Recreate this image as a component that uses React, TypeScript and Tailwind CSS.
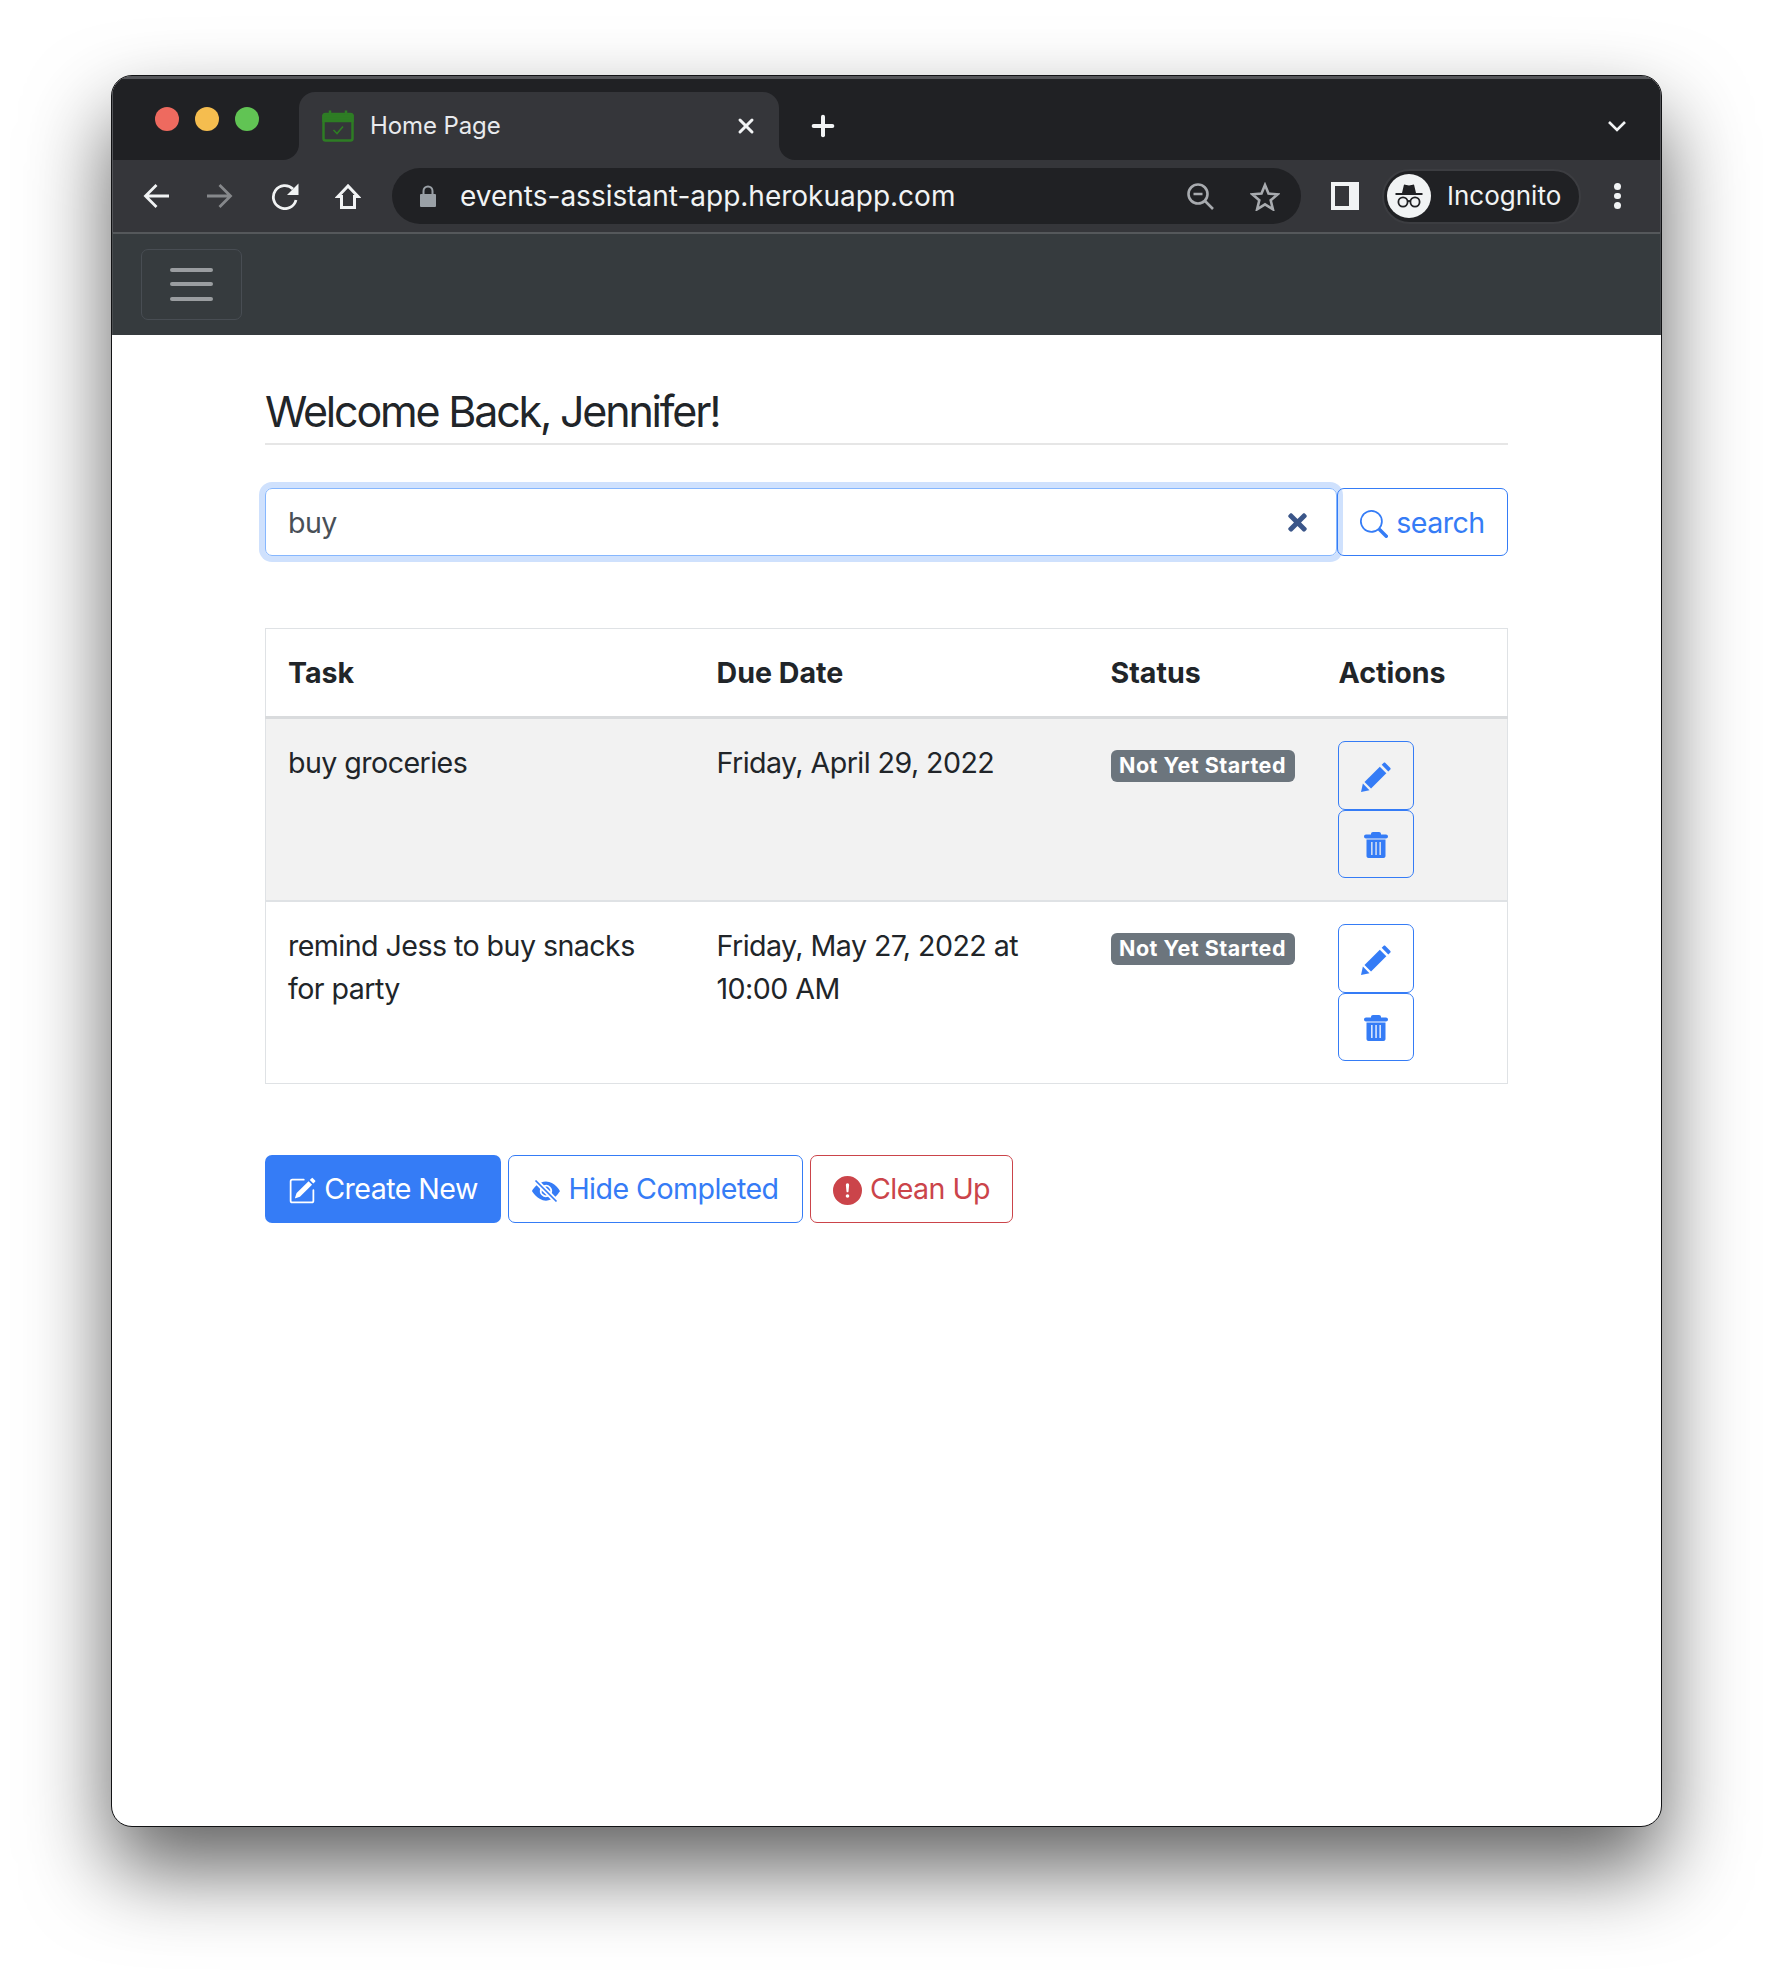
import { Plus, X } from 'lucide-react'
import { BsExclamationCircleFill, BsEyeSlashFill, BsPencilSquare, BsSearch } from 'react-icons/bs'
import { FaTimes } from 'react-icons/fa'

function Favicon() {
  return (
    <svg viewBox="0 0 32 32" className="w-[32px] h-[32px] shrink-0" fill="none" stroke="#2e7d24" strokeWidth="2.5">
      <rect x="1.5" y="4" width="29" height="26.5" rx="2" />
      <path d="M1.5 6h29v5h-29z" fill="#2e7d24" />
      <path d="M8 0.5v4M24 0.5v4" />
      <path d="M11.5 20l3.5 3.5 6-7" strokeWidth="1.6" />
    </svg>
  )
}

function BackIcon({ color }: { color: string }) {
  return (
    <svg viewBox="0 0 26 26" className="w-[26px] h-[26px] shrink-0" fill="none" stroke={color} strokeWidth="2.8">
      <path d="M26 13H3M13.5 2L2.5 13l11 11" />
    </svg>
  )
}

function ForwardIcon({ color }: { color: string }) {
  return (
    <svg viewBox="0 0 26 26" className="w-[26px] h-[26px] shrink-0" fill="none" stroke={color} strokeWidth="2.8">
      <path d="M0 13h23M12.5 2l11 11-11 11" />
    </svg>
  )
}

function ReloadIcon() {
  return (
    <svg viewBox="0 0 28 27" className="w-[28px] h-[27px] shrink-0" fill="none" stroke="#f1f3f4" strokeWidth="2.8">
      <path d="M22 6A11.5 11.5 0 1 0 25 17" />
      <path d="M27.5 0.5v11.5h-11.5z" fill="#f1f3f4" stroke="none" />
    </svg>
  )
}

function HomeIcon() {
  return (
    <svg viewBox="0 0 26 26" className="w-[26px] h-[26px] shrink-0" fill="none" stroke="#f1f3f4" strokeWidth="3">
      <path d="M13 3L3 13.5H6.5V24.5H19.5V13.5H23Z" />
    </svg>
  )
}

function ZoomOutIcon() {
  return (
    <svg viewBox="0 0 27 27" className="w-[27px] h-[27px] shrink-0" fill="none" stroke="#a8abaf" strokeWidth="2.6">
      <circle cx="11" cy="11" r="9.5" />
      <path d="M6.5 11h9M17.5 17.5l8.5 8.5" />
    </svg>
  )
}

function StarIcon() {
  return (
    <svg viewBox="0 0 30 29" className="w-[30px] h-[29px] shrink-0" fill="none" stroke="#a8abaf" strokeWidth="2.6">
      <path d="M15 3l3.5 8.6 9.2.7-7 6 2.2 9-7.900-4.900-7.900 4.900 2.200-9-7-6 9.200-.7z" />
    </svg>
  )
}

function IncognitoIcon() {
  return (
    <div className="w-[44px] h-[44px] rounded-full bg-[#f1f3f4] flex items-center justify-center shrink-0">
      <svg viewBox="0 0 30 30" className="w-[30px] h-[30px]" fill="none" stroke="#202124" strokeWidth="1.8">
        <path d="M8 12L10 3.500 15 4.600 20 3.500 22 12Z" fill="#202124" stroke="none" />
        <path d="M1.500 13h27" />
        <circle cx="9" cy="21" r="4.600" />
        <circle cx="21" cy="21" r="4.600" />
        <path d="M13.600 20.500c1-.8 1.800-.8 2.800 0" />
      </svg>
    </div>
  )
}

function PencilIcon() {
  return (
    <svg viewBox="0 0 29 29" className="w-[30px] h-[30px] mt-[4px]" fill="currentColor">
      <path d="M0 29l1.800-8.200 6.400 6.400z" />
      <path d="M3.400 19.300L18.200 4.500l6.300 6.300L9.700 25.600z" />
      <path d="M20 2.700L22 .8c.4-.4 1-.4 1.400 0l5 5c.4.4.4 1 0 1.400l-2 2z" />
    </svg>
  )
}

function TrashIcon() {
  return (
    <svg viewBox="0 0 24 27" className="w-[24px] h-[27px] mt-[2px]" fill="currentColor">
      <path d="M7 3c0-1.200.8-2 2-2h6c1.200 0 2 .8 2 2v.5h5c1.100 0 2 .9 2 2s-.9 2-2 2H2c-1.100 0-2-.9-2-2s.9-2 2-2h5z" />
      <path
        fillRule="evenodd"
        d="M2.500 8.500h19V25c0 1.100-.9 2-2 2h-15c-1.100 0-2-.9-2-2zM7.200 11v13h1.300V11zM11.400 11v13h1.300V11zM15.500 11v13h1.300V11z"
      />
    </svg>
  )
}

function ActionButtons() {
  return (
    <div className="flex flex-col w-[76px]">
      <button className="h-[68.500px] flex items-center justify-center border border-[#357cf6] rounded-[7px] text-[#357cf6]">
        <PencilIcon />
      </button>
      <button className="h-[68.500px] flex items-center justify-center border border-[#357cf6] rounded-[7px] text-[#357cf6]">
        <TrashIcon />
      </button>
    </div>
  )
}

function StatusBadge() {
  return (
    <span className="inline-flex items-center justify-center h-[32px] w-[184px] rounded-[6px] bg-[#6c757d] text-white text-[21.500px] font-bold tracking-[0.5px]">
      Not Yet Started
    </span>
  )
}

const rows = [
  { task: 'buy groceries', due: 'Friday, April 29, 2022', striped: true },
  { task: 'remind Jess to buy snacks for party', due: 'Friday, May 27, 2022 at 10:00 AM', striped: false },
]

export default function App() {
  return (
    <div className="w-[1772px] h-[1974px] bg-white pt-[75px] pl-[111px] font-['Inter','Liberation_Sans',sans-serif] overflow-hidden">
      <div className="w-[1551px] h-[1752px] rounded-[21px] overflow-hidden bg-white border border-[#111214] shadow-[0_42px_84px_rgba(0,0,0,0.62)] flex flex-col">
        {/* tab strip */}
        <div className="h-[84px] bg-[#202124] border-t-[3px] border-x border-[#55565a] flex items-end shrink-0">
          <div className="flex items-center gap-[16px] pl-[42px] w-[186px] self-start pt-[28px]">
            <span className="w-[24px] h-[24px] rounded-full bg-[#ee6a5f]" />
            <span className="w-[24px] h-[24px] rounded-full bg-[#f5bd4f]" />
            <span className="w-[24px] h-[24px] rounded-full bg-[#61c454]" />
          </div>
          <div className="relative w-[480px] h-[68px] bg-[#35363a] rounded-t-[16px] flex items-center pl-[23px] pr-[21px]">
            <div className="absolute left-[-16px] bottom-0 w-[16px] h-[16px] bg-[#35363a]">
              <div className="w-full h-full bg-[#202124] rounded-br-[16px]" />
            </div>
            <div className="absolute right-[-16px] bottom-0 w-[16px] h-[16px] bg-[#35363a]">
              <div className="w-full h-full bg-[#202124] rounded-bl-[16px]" />
            </div>
            <Favicon />
            <span className="ml-[16px] text-[24px] tracking-[-0.1px] text-[#e8eaed] flex-1 leading-none">Home Page</span>
            <X className="w-[24px] h-[24px] text-[#f1f3f4]" strokeWidth={3} />
          </div>
          <Plus className="w-[32px] h-[32px] text-[#f1f3f4] ml-[28px] mb-[18px]" strokeWidth={3} />
          <div className="flex-1 flex justify-end pr-[34px] pb-[28px]">
            <svg viewBox="0 0 18 12" className="w-[18px] h-[12px]" fill="none" stroke="#f1f3f4" strokeWidth="2.6">
              <path d="M1 2l8 8 8-8" />
            </svg>
          </div>
        </div>
        {/* toolbar */}
        <div className="h-[72px] bg-[#35363a] border-x border-[#55565a] flex items-center shrink-0 pl-[30px]">
          <BackIcon color="#f1f3f4" />
          <div className="ml-[38px]">
            <ForwardIcon color="#86888b" />
          </div>
          <div className="ml-[38px]">
            <ReloadIcon />
          </div>
          <div className="ml-[36px]">
            <HomeIcon />
          </div>
          <div className="ml-[31px] w-[909px] h-[56px] rounded-full bg-[#202124] flex items-center pl-[28px] pr-[21px]">
            <svg viewBox="0 0 16 22" className="w-[16px] h-[22px] shrink-0" fill="#9aa0a6">
              <path d="M1 9h14a1 1 0 0 1 1 1v11a1 1 0 0 1-1 1H1a1 1 0 0 1-1-1V10a1 1 0 0 1 1-1z" />
              <path d="M3.500 10V6a4.500 4.500 0 0 1 9 0v4" fill="none" stroke="#9aa0a6" strokeWidth="2" />
            </svg>
            <span className="ml-[24px] text-[28px] text-[#f1f3f4] flex-1 leading-none">events-assistant-app.herokuapp.com</span>
            <ZoomOutIcon />
            <div className="ml-[36px]">
              <StarIcon />
            </div>
          </div>
          <div className="ml-[30px] w-[28px] h-[28px] bg-[#f1f3f4] flex items-stretch pl-[4px] py-[4px] shrink-0">
            <div className="w-[14px] bg-[#35363a]" />
          </div>
          <div className="ml-[23px] w-[199px] h-[55px] rounded-full bg-[#202124] border-2 border-[#3c3d41] flex items-center pl-[3px] shrink-0">
            <IncognitoIcon />
            <span className="ml-[16px] text-[26px] text-[#f1f3f4] leading-none">Incognito</span>
          </div>
          <div className="ml-[33px] flex flex-col gap-[3px]">
            <span className="w-[6.500px] h-[6.500px] rounded-full bg-[#f1f3f4]" />
            <span className="w-[6.500px] h-[6.500px] rounded-full bg-[#f1f3f4]" />
            <span className="w-[6.500px] h-[6.500px] rounded-full bg-[#f1f3f4]" />
          </div>
        </div>
        {/* navbar */}
        <div className="h-[103px] bg-[#363b3e] border-t-2 border-x border-[#55585b] border-x-[#4a4d50] shrink-0 flex items-center pl-[28px]">
          <button className="w-[101px] h-[71px] mb-[1px] rounded-[7px] border border-[#484d53] flex flex-col items-center justify-center gap-[10.500px]">
            <span className="w-[43px] h-[4px] rounded-full bg-[#9a9da0]" />
            <span className="w-[43px] h-[4px] rounded-full bg-[#9a9da0]" />
            <span className="w-[43px] h-[4px] rounded-full bg-[#9a9da0]" />
          </button>
        </div>
        {/* content */}
        <main className="flex-1 pl-[153px] pr-[153px] pt-[50px] text-[#212529] tracking-[-0.55px]">
          <h4 className="text-[43px] leading-[52px] pb-[6px] border-b-2 border-[#e6e6e6] tracking-[-2.200px]">Welcome Back, Jennifer!</h4>
          <div className="flex mt-[43px] h-[68px]">
            <div className="flex-1 flex items-center rounded-[7px] border border-[#86b7fe] ring-[6px] ring-[#cfe1fd] pl-[22px] pr-[25px] relative">
              <span className="flex-1 text-[28.600px] text-[#495057] pt-[2px]">buy</span>
              <FaTimes className="w-[27px] h-[27px] text-[#3b5689]" />
            </div>
            <button className="w-[171px] relative flex items-center justify-center gap-[8px] border border-[#357cf6] rounded-[7px] text-[#357cf6] text-[28.600px]">
              <BsSearch className="w-[28px] h-[28px] mt-[3px]" />
              <span className="pt-[2px]">search</span>
            </button>
          </div>
          <table className="w-full mt-[72px] border border-[#dfe2e5] text-[28.600px] leading-[43px] table-fixed">
            <thead>
              <tr className="h-[89px] border-b-[3px] border-[#d9dbdd] tracking-[0px]">
                <th className="w-[429px] pl-[22px] text-left font-bold">Task</th>
                <th className="w-[394px] pl-[22px] text-left font-bold">Due Date</th>
                <th className="w-[228px] pl-[22px] text-left font-bold">Status</th>
                <th className="pl-[22px] text-left font-bold">Actions</th>
              </tr>
            </thead>
            <tbody>
              {rows.map((row) => (
                <tr key={row.task} className={row.striped ? 'bg-[#f2f2f2] border-b-2 border-[#dfe2e5]' : ''}>
                  <td className="align-top pl-[22px] pr-[22px] pt-[22px]">{row.task}</td>
                  <td className="align-top pl-[22px] pr-[22px] pt-[22px]">{row.due}</td>
                  <td className="align-top pl-[22px] pt-[22px]">
                    <StatusBadge />
                  </td>
                  <td className="align-top pl-[21px] pt-[22px] pb-[22px]">
                    <ActionButtons />
                  </td>
                </tr>
              ))}
            </tbody>
          </table>
          <div className="flex gap-[7px] mt-[71px] text-[28.600px]">
            <button className="h-[68px] w-[236px] rounded-[7px] bg-[#357cf6] text-white flex items-center justify-center gap-[8px]">
              <BsPencilSquare className="w-[28px] h-[28px] mt-[3px]" />
              Create New
            </button>
            <button className="h-[68px] w-[295px] rounded-[7px] border border-[#357cf6] text-[#357cf6] flex items-center justify-center gap-[8px]">
              <BsEyeSlashFill className="w-[28px] h-[28px] mt-[3px]" />
              Hide Completed
            </button>
            <button className="h-[68px] w-[203px] rounded-[7px] border border-[#cb444a] text-[#cb444a] flex items-center justify-center gap-[8px]">
              <BsExclamationCircleFill className="w-[29px] h-[29px] mt-[3px]" />
              Clean Up
            </button>
          </div>
        </main>
      </div>
    </div>
  )
}
